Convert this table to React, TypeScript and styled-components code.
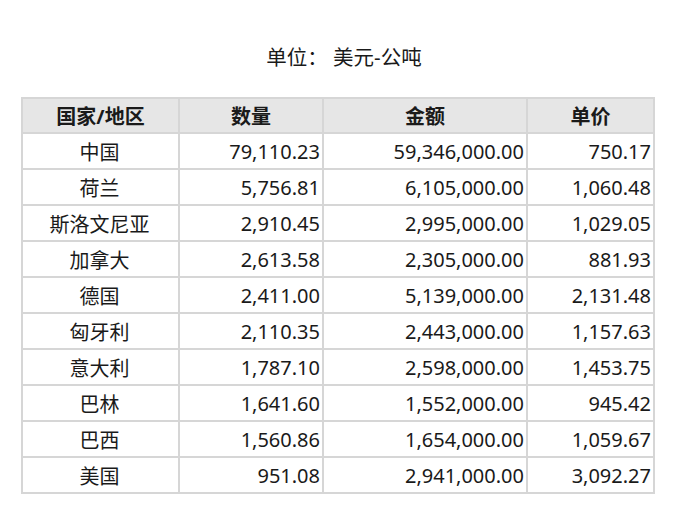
import React from 'react';
import styled, { createGlobalStyle } from 'styled-components';

const rows: [string, string, string, string][] = [
  ['中国', '79,110.23', '59,346,000.00', '750.17'],
  ['荷兰', '5,756.81', '6,105,000.00', '1,060.48'],
  ['斯洛文尼亚', '2,910.45', '2,995,000.00', '1,029.05'],
  ['加拿大', '2,613.58', '2,305,000.00', '881.93'],
  ['德国', '2,411.00', '5,139,000.00', '2,131.48'],
  ['匈牙利', '2,110.35', '2,443,000.00', '1,157.63'],
  ['意大利', '1,787.10', '2,598,000.00', '1,453.75'],
  ['巴林', '1,641.60', '1,552,000.00', '945.42'],
  ['巴西', '1,560.86', '1,654,000.00', '1,059.67'],
  ['美国', '951.08', '2,941,000.00', '3,092.27'],
];

const GlobalStyle = createGlobalStyle`
  body {
    margin: 0;
    background: #fff;
    font-family: "Noto Sans", "Noto Sans CJK SC", sans-serif;
    color: #1a1a1a;
  }
`;

const Page = styled.div`
  padding: 43px 26px 0 21px;
`;

const Title = styled.div`
  text-align: center;
  font-size: 20.5px;
  line-height: 28px;
  padding-left: 14px;
  margin-bottom: 26px;
`;

const Table = styled.table`
  border-collapse: collapse;
  width: 632px;
  table-layout: fixed;
  font-size: 20px;
`;

const Head = styled.th`
  background: #e6e6e6;
  border: 2px solid #d6d6d6;
  height: 33px;
  padding: 0;
  font-weight: 700;
  text-align: center;
`;

const Cell = styled.td<{ $align?: 'center' | 'right' }>`
  border: 2px solid #d6d6d6;
  height: 34px;
  padding: 0 2px 0 0;
  text-align: ${(p) => p.$align || 'right'};
  white-space: nowrap;
`;

const App: React.FC = () => (
  <Page>
    <GlobalStyle />
    <Title>单位： 美元-公吨</Title>
    <Table>
      <colgroup>
        <col style={{ width: 157 }} />
        <col style={{ width: 144 }} />
        <col style={{ width: 204 }} />
        <col style={{ width: 127 }} />
      </colgroup>
      <thead>
        <tr>
          <Head>国家/地区</Head>
          <Head>数量</Head>
          <Head>金额</Head>
          <Head>单价</Head>
        </tr>
      </thead>
      <tbody>
        {rows.map((r) => (
          <tr key={r[0]}>
            <Cell $align="center">{r[0]}</Cell>
            <Cell>{r[1]}</Cell>
            <Cell>{r[2]}</Cell>
            <Cell>{r[3]}</Cell>
          </tr>
        ))}
      </tbody>
    </Table>
  </Page>
);

export default App;
